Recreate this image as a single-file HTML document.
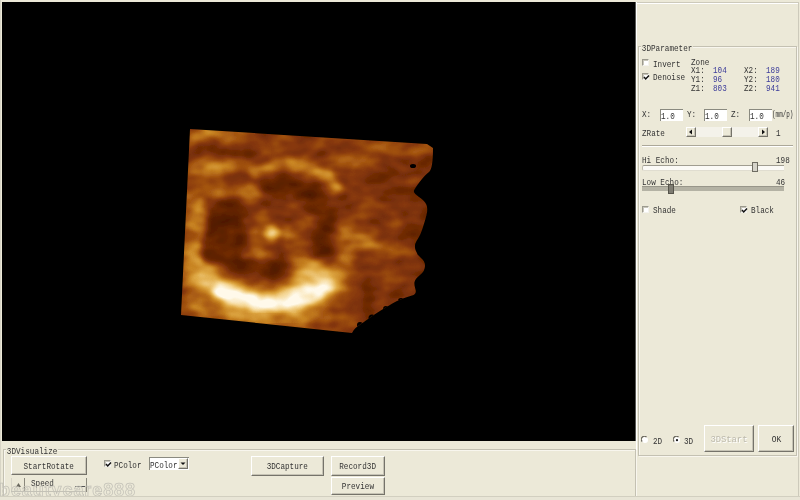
<!DOCTYPE html>
<html><head><meta charset="utf-8">
<style>
html,body{margin:0;padding:0;}
body{width:800px;height:500px;overflow:hidden;background:#ECE9D8;position:relative;font-family:"Liberation Mono",monospace;font-size:9px;color:#333;}
.a{position:absolute;}
.t{position:absolute;white-space:nowrap;line-height:10px;transform:scaleX(0.85);transform-origin:0 0;}
.view{left:2px;top:2px;width:633px;height:439px;background:#000;box-shadow:1px 0 0 #5a5a55;}
.etch{position:absolute;border:1px solid #c4c1b2;box-shadow:1px 1px 0 #f8f6ee, inset 1px 1px 0 #f8f6ee;}
.lbl{position:absolute;background:#ECE9D8;padding:0 1px;white-space:nowrap;line-height:10px;transform:scaleX(0.85);transform-origin:0 0;}
.s{display:inline-block;transform:scaleX(0.85);}
.cb{position:absolute;width:7px;height:7px;background:#fff;border-top:1px solid #9c9a8e;border-left:1px solid #9c9a8e;border-right:1px solid #f4f3ee;border-bottom:1px solid #f4f3ee;box-shadow:inset 1px 1px 0 #c8c6ba;box-sizing:border-box;}
.ck{position:absolute;left:0;top:0;}
.btn{position:absolute;background:#ECE9D8;border-top:1px solid #fff;border-left:1px solid #fff;border-right:1px solid #75736a;border-bottom:1px solid #75736a;box-shadow:-1px -1px 0 #c6c3b5 inset;box-sizing:border-box;text-align:center;white-space:nowrap;}
.edit{position:absolute;background:#fff;border-top:1px solid #8a8a80;border-left:1px solid #8a8a80;box-sizing:border-box;}
.val{color:#3c3c9a;}
#wrap{position:absolute;left:0;top:0;width:800px;height:500px;filter:blur(0.4px);}
</style></head><body><div id="wrap">
<!-- 3D view -->
<div class="a view"></div>
<svg class="a" style="left:0;top:0" width="800" height="500" viewBox="0 0 800 500">
<defs>
<clipPath id="cp"><path d="M190,129 L427,144 L433,148 Q433,169 429,172 Q425,175 420,181.5 Q415,188 414,190.5 Q413,193 419,197 Q425,201 426.5,205 Q428,209 426.5,215 Q425,221 423,227 Q421,233 420,235 Q419,237 416.5,241 Q414,245 415.5,250 Q417,255 421,258 Q425,261 425,266 Q425,271 420,275 Q415,279 414.5,282 Q414,285 415.5,289.5 Q417,294 412,295.5 Q407,297 403,298.5 Q399,300 397,301 Q395,302 391.5,304 Q388,306 381.5,310 Q375,314 369.5,318 Q364,322 359.5,325 Q355,328 353.5,330.5 L352,333 L181,315 Z"/></clipPath>
<filter id="b10" x="-50%" y="-50%" width="200%" height="200%"><feGaussianBlur stdDeviation="10"/></filter>
<filter id="b7" x="-50%" y="-50%" width="200%" height="200%"><feGaussianBlur stdDeviation="7"/></filter>
<filter id="b5" x="-50%" y="-50%" width="200%" height="200%"><feGaussianBlur stdDeviation="5"/></filter>
<filter id="b3" x="-50%" y="-50%" width="200%" height="200%"><feGaussianBlur stdDeviation="3"/></filter>
<filter id="b2" x="-50%" y="-50%" width="200%" height="200%"><feGaussianBlur stdDeviation="2"/></filter>
<filter id="edge" x="150" y="100" width="320" height="260" filterUnits="userSpaceOnUse"><feGaussianBlur stdDeviation="0.6"/></filter>
<filter id="us" x="0" y="0" width="800" height="500" filterUnits="userSpaceOnUse" color-interpolation-filters="sRGB">
<feTurbulence type="fractalNoise" baseFrequency="0.045 0.07" numOctaves="2" seed="11" result="n"/>
<feColorMatrix in="n" type="matrix" values="1 0 0 0 0  1 0 0 0 0  1 0 0 0 0  0 0 0 0 1" result="ng"/>
<feComposite in="SourceGraphic" in2="ng" operator="arithmetic" k1="0" k2="1" k3="0.3" k4="-0.15" result="m"/>
<feComponentTransfer in="m">
<feFuncR type="table" tableValues="0 0.14 0.24 0.33 0.42 0.53 0.65 0.78 0.88 0.96 1"/>
<feFuncG type="table" tableValues="0 0.03 0.07 0.11 0.16 0.22 0.34 0.51 0.67 0.84 0.98"/>
<feFuncB type="table" tableValues="0 0 0 0.01 0.02 0.04 0.07 0.13 0.28 0.58 0.92"/>
</feComponentTransfer>
</filter>
</defs>
<g filter="url(#edge)"><g clip-path="url(#cp)">
<g filter="url(#us)">
<rect x="170" y="120" width="280" height="220" fill="rgb(128,128,128)"/>
<g filter="url(#b7)">
<ellipse cx="380" cy="290" rx="30" ry="20" fill="rgb(118,118,118)"/>
<ellipse cx="395" cy="190" rx="35" ry="30" fill="rgb(118,118,118)"/>
<ellipse cx="422" cy="235" rx="12" ry="80" fill="rgb(108,108,108)"/>
<ellipse cx="265" cy="316" rx="70" ry="10" fill="rgb(175,175,175)"/>
<ellipse cx="193" cy="262" rx="9" ry="62" fill="rgb(180,180,180)"/>
</g>
<g filter="url(#b5)">
<ellipse cx="228" cy="242" rx="27" ry="44" fill="rgb(88,88,88)"/>
<path d="M256,190 C300,176 332,198 328,240 C324,266 305,280 280,284" stroke="rgb(88,88,88)" stroke-width="22" fill="none"/>
<ellipse cx="262" cy="275" rx="40" ry="14" fill="rgb(90,90,90)"/>
<ellipse cx="222" cy="134" rx="36" ry="5" fill="rgb(195,195,195)"/>
<ellipse cx="230" cy="152" rx="35" ry="6" fill="rgb(100,100,100)"/>
<ellipse cx="215" cy="168" rx="26" ry="6" fill="rgb(190,190,190)"/>
<ellipse cx="225" cy="190" rx="35" ry="5" fill="rgb(170,170,170)"/>
<ellipse cx="345" cy="158" rx="18" ry="8" fill="rgb(150,150,150)"/>
<ellipse cx="390" cy="147" rx="40" ry="5" fill="rgb(150,150,150)"/>
<ellipse cx="347" cy="245" rx="9" ry="35" fill="rgb(155,155,155)"/>
<path d="M334,240 Q362,232 394,257" stroke="rgb(170,170,170)" stroke-width="9" fill="none"/>
</g>
<g filter="url(#b3)">
<ellipse cx="252" cy="196" rx="12" ry="4" fill="rgb(160,160,160)"/>
<circle cx="262" cy="215" r="5" fill="rgb(160,160,160)"/>
<circle cx="300" cy="225" r="6" fill="rgb(150,150,150)"/>
<ellipse cx="268" cy="238" rx="20" ry="24" fill="rgb(135,135,135)"/>
<path d="M201,195 Q192,235 199,272" stroke="rgb(178,178,178)" stroke-width="7" fill="none"/>
<ellipse cx="287" cy="232" rx="6" ry="5" fill="rgb(170,170,170)"/>
<path d="M250,175 C268,160 318,156 340,192" stroke="rgb(190,190,190)" stroke-width="9" fill="none"/>
<circle cx="292" cy="163" r="5" fill="rgb(205,205,205)"/>
<circle cx="328" cy="174" r="5" fill="rgb(195,195,195)"/>
<circle cx="272" cy="233" r="7" fill="rgb(225,225,225)"/>
<circle cx="246" cy="222" r="5" fill="rgb(160,160,160)"/>
<path d="M240,258 Q258,250 275,256" stroke="rgb(165,165,165)" stroke-width="5" fill="none"/>
<circle cx="290" cy="250" r="6" fill="rgb(140,140,140)"/>
<circle cx="232" cy="240" r="5" fill="rgb(118,118,118)"/>
<ellipse cx="202" cy="220" rx="5" ry="20" fill="rgb(170,170,170)"/>
</g>
<g filter="url(#b7)">
<path d="M198,270 C232,310 298,314 338,272" stroke="rgb(214,214,214)" stroke-width="30" fill="none"/>
<ellipse cx="312" cy="276" rx="22" ry="16" fill="rgb(220,220,220)"/>
</g>
<g filter="url(#b3)">
<path d="M216,286 C242,307 295,310 330,282" stroke="rgb(255,255,255)" stroke-width="15" fill="none"/>
</g>
</g>
<ellipse cx="413" cy="166" rx="3" ry="2" fill="#000"/>
<circle cx="401" cy="301" r="3" fill="#000"/><circle cx="386" cy="309" r="3" fill="#000"/><circle cx="372" cy="318" r="3.5" fill="#000"/><circle cx="360" cy="325" r="3" fill="#000"/><circle cx="430" cy="178" r="4" fill="#000"/>
</g></g>
</svg>

<div class="a" style="left:0;top:0;width:1px;height:500px;background:#d8d5c6"></div>

<!-- right panel frame -->
<div class="a" style="left:636px;top:2px;width:1px;height:494px;background:#fff"></div>
<div class="a" style="left:637px;top:2px;width:162px;height:1px;background:#cdcabb"></div>
<div class="a" style="left:637px;top:3px;width:162px;height:1px;background:#fff"></div>
<div class="a" style="left:798px;top:2px;width:1px;height:494px;background:#cdcabb"></div>

<!-- 3DParameter group -->
<div class="etch" style="left:638px;top:46px;width:157px;height:408px;"></div>
<div class="lbl" style="left:641px;top:44px;">3DParameter</div>

<div class="cb" style="left:642px;top:59px;"></div>
<div class="t" style="left:653px;top:60px;">Invert</div>
<div class="cb" style="left:642px;top:73px;"><svg class="ck" width="7" height="7" viewBox="0 0 7 7"><path d="M1,3 L2.7,4.9 L6,1.4" stroke="#111" stroke-width="1.5" fill="none"/></svg></div>
<div class="t" style="left:653px;top:73px;">Denoise</div>

<div class="t" style="left:691px;top:58px;">Zone</div>
<div class="t" style="left:691px;top:66px;">X1:</div>
<div class="t" style="left:691px;top:75px;">Y1:</div>
<div class="t" style="left:691px;top:84px;">Z1:</div>
<div class="t val" style="left:713px;top:66px;">104</div>
<div class="t val" style="left:713px;top:75px;">96</div>
<div class="t val" style="left:713px;top:84px;">803</div>
<div class="t" style="left:744px;top:66px;">X2:</div>
<div class="t" style="left:744px;top:75px;">Y2:</div>
<div class="t" style="left:744px;top:84px;">Z2:</div>
<div class="t val" style="left:766px;top:66px;">189</div>
<div class="t val" style="left:766px;top:75px;">180</div>
<div class="t val" style="left:766px;top:84px;">941</div>

<div class="t" style="left:642px;top:110px;">X:</div>
<div class="edit" style="left:660px;top:109px;width:23px;height:12px;"></div>
<div class="t" style="left:661px;top:112px;">1.0</div>
<div class="t" style="left:687px;top:110px;">Y:</div>
<div class="edit" style="left:704px;top:109px;width:23px;height:12px;"></div>
<div class="t" style="left:705px;top:112px;">1.0</div>
<div class="t" style="left:731px;top:110px;">Z:</div>
<div class="edit" style="left:749px;top:109px;width:23px;height:12px;"></div>
<div class="t" style="left:750px;top:112px;">1.0</div>
<div class="t" style="left:772px;top:110px;transform:scaleX(0.66)">(mm/p)</div>

<div class="t" style="left:642px;top:129px;">ZRate</div>
<div class="a" style="left:686px;top:127px;width:82px;height:10px;background:#f4f2ea"></div>
<div class="btn" style="left:686px;top:127px;width:10px;height:10px;"><svg class="ck" width="8" height="8"><path d="M5,1.5 L2,4 L5,6.5Z" fill="#111"/></svg></div>
<div class="btn" style="left:722px;top:127px;width:10px;height:10px;"></div>
<div class="btn" style="left:758px;top:127px;width:10px;height:10px;"><svg class="ck" width="8" height="8"><path d="M3,1.5 L6,4 L3,6.5Z" fill="#111"/></svg></div>
<div class="t" style="left:776px;top:129px;">1</div>

<div class="a" style="left:642px;top:145px;width:151px;height:1px;background:#ACA899"></div>
<div class="a" style="left:642px;top:146px;width:151px;height:1px;background:#fff"></div>

<div class="t" style="left:642px;top:156px;">Hi Echo:</div>
<div class="t" style="left:776px;top:156px;">198</div>
<div class="a" style="left:642px;top:165px;width:142px;height:6px;background:#fbfaf6;border-top:1px solid #a09d90;border-left:1px solid #c0bdb0;border-bottom:1px solid #e0ddd0;box-sizing:border-box;border-radius:2px 0 0 2px"></div>
<div class="a" style="left:752px;top:162px;width:6px;height:10px;background:#d6d4ca;border:1px solid #6e6c62;box-sizing:border-box"></div>

<div class="t" style="left:642px;top:178px;">Low Echo:</div>
<div class="t" style="left:776px;top:178px;">46</div>
<div class="a" style="left:642px;top:186px;width:142px;height:5px;background:#b4b2a4;border-top:1px solid #98968a;box-sizing:border-box"></div>
<div class="a" style="left:668px;top:184px;width:6px;height:10px;background:#7e7c72;border:1px solid #55534a;box-sizing:border-box"></div>

<div class="cb" style="left:642px;top:206px;"></div>
<div class="t" style="left:653px;top:206px;">Shade</div>
<div class="cb" style="left:740px;top:206px;"><svg class="ck" width="7" height="7" viewBox="0 0 7 7"><path d="M1,3 L2.7,4.9 L6,1.4" stroke="#111" stroke-width="1.5" fill="none"/></svg></div>
<div class="t" style="left:751px;top:206px;">Black</div>

<svg class="a" style="left:641px;top:436px" width="8" height="8" viewBox="0 0 8 8"><circle cx="4" cy="4" r="3" fill="#fff"/><path d="M1.2,5.5 A3,3 0 0 1 5.5,1.2" stroke="#6a685e" stroke-width="1.2" fill="none"/></svg>
<svg class="a" style="left:673px;top:436px" width="8" height="8" viewBox="0 0 8 8"><circle cx="4" cy="4" r="3" fill="#fff"/><path d="M1.2,5.5 A3,3 0 0 1 5.5,1.2" stroke="#6a685e" stroke-width="1.2" fill="none"/><circle cx="4" cy="4.2" r="1.1" fill="#111"/></svg>
<div class="t" style="left:653px;top:437px;">2D</div>
<div class="t" style="left:684px;top:437px;">3D</div>
<div class="btn" style="left:704px;top:425px;width:50px;height:27px;line-height:28px;color:#bdbaad;text-shadow:1px 1px 0 #fff;"><span class="s" style="transform:scaleX(0.98)">3DStart</span></div>
<div class="btn" style="left:758px;top:425px;width:36px;height:27px;line-height:28px;"><span class="s" style="transform:scaleX(0.88)">OK</span></div>

<!-- bottom group -->
<div class="etch" style="left:3px;top:449px;width:631px;height:46px;"></div>
<div class="lbl" style="left:6px;top:447px;">3DVisualize</div>
<div class="btn" style="left:11px;top:456px;width:76px;height:19px;line-height:20px;"><span class="s">StartRotate</span></div>
<div class="cb" style="left:104px;top:460px;"><svg class="ck" width="7" height="7" viewBox="0 0 7 7"><path d="M1,3 L2.7,4.9 L6,1.4" stroke="#111" stroke-width="1.5" fill="none"/></svg></div>
<div class="t" style="left:114px;top:461px;">PColor</div>
<div class="edit" style="left:149px;top:457px;width:40px;height:13px;"></div>
<div class="t" style="left:150px;top:461px;">PColor</div>
<div class="btn" style="left:178px;top:458px;width:10px;height:11px;"><svg class="ck" width="8" height="9"><path d="M1.5,3.5 L6.5,3.5 L4,6Z" fill="#111"/></svg></div>
<div class="btn" style="left:251px;top:456px;width:73px;height:20px;line-height:20px;"><span class="s">3DCapture</span></div>
<div class="btn" style="left:331px;top:456px;width:54px;height:20px;line-height:21px;"><span class="s">Record3D</span></div>
<div class="btn" style="left:331px;top:477px;width:54px;height:18px;line-height:19px;"><span class="s">Preview</span></div>

<!-- speed -->
<div class="a" style="left:11px;top:478px;width:1px;height:14px;background:#d8d5c8"></div>
<div class="a" style="left:24px;top:478px;width:1px;height:14px;background:#8a887c"></div>
<div class="a" style="left:11px;top:491px;width:76px;height:1px;background:#c4c2b6"></div>
<div class="a" style="left:86px;top:478px;width:1px;height:14px;background:#8a887c"></div>
<div class="a" style="left:75px;top:486px;width:10px;height:1px;background:#555"></div>
<svg class="a" style="left:14px;top:482px" width="9" height="7"><path d="M4.5,1 L7,5 L2,5Z" fill="#6a685e"/></svg>
<div class="t" style="left:31px;top:479px;">Speed</div>
<svg class="a" style="left:0;top:470px" width="150" height="30"><text x="-1" y="25.5" font-family="Liberation Sans" font-weight="bold" font-size="18" textLength="136" lengthAdjust="spacing" fill="none" stroke="#c4c2b8" stroke-width="0.75">beautycare888</text></svg>
<div class="a" style="left:0;top:496px;width:800px;height:1px;background:#d2cfc0"></div>
<div class="a" style="left:0;top:497px;width:800px;height:3px;background:#e8e5d6"></div>
</div></body></html>
